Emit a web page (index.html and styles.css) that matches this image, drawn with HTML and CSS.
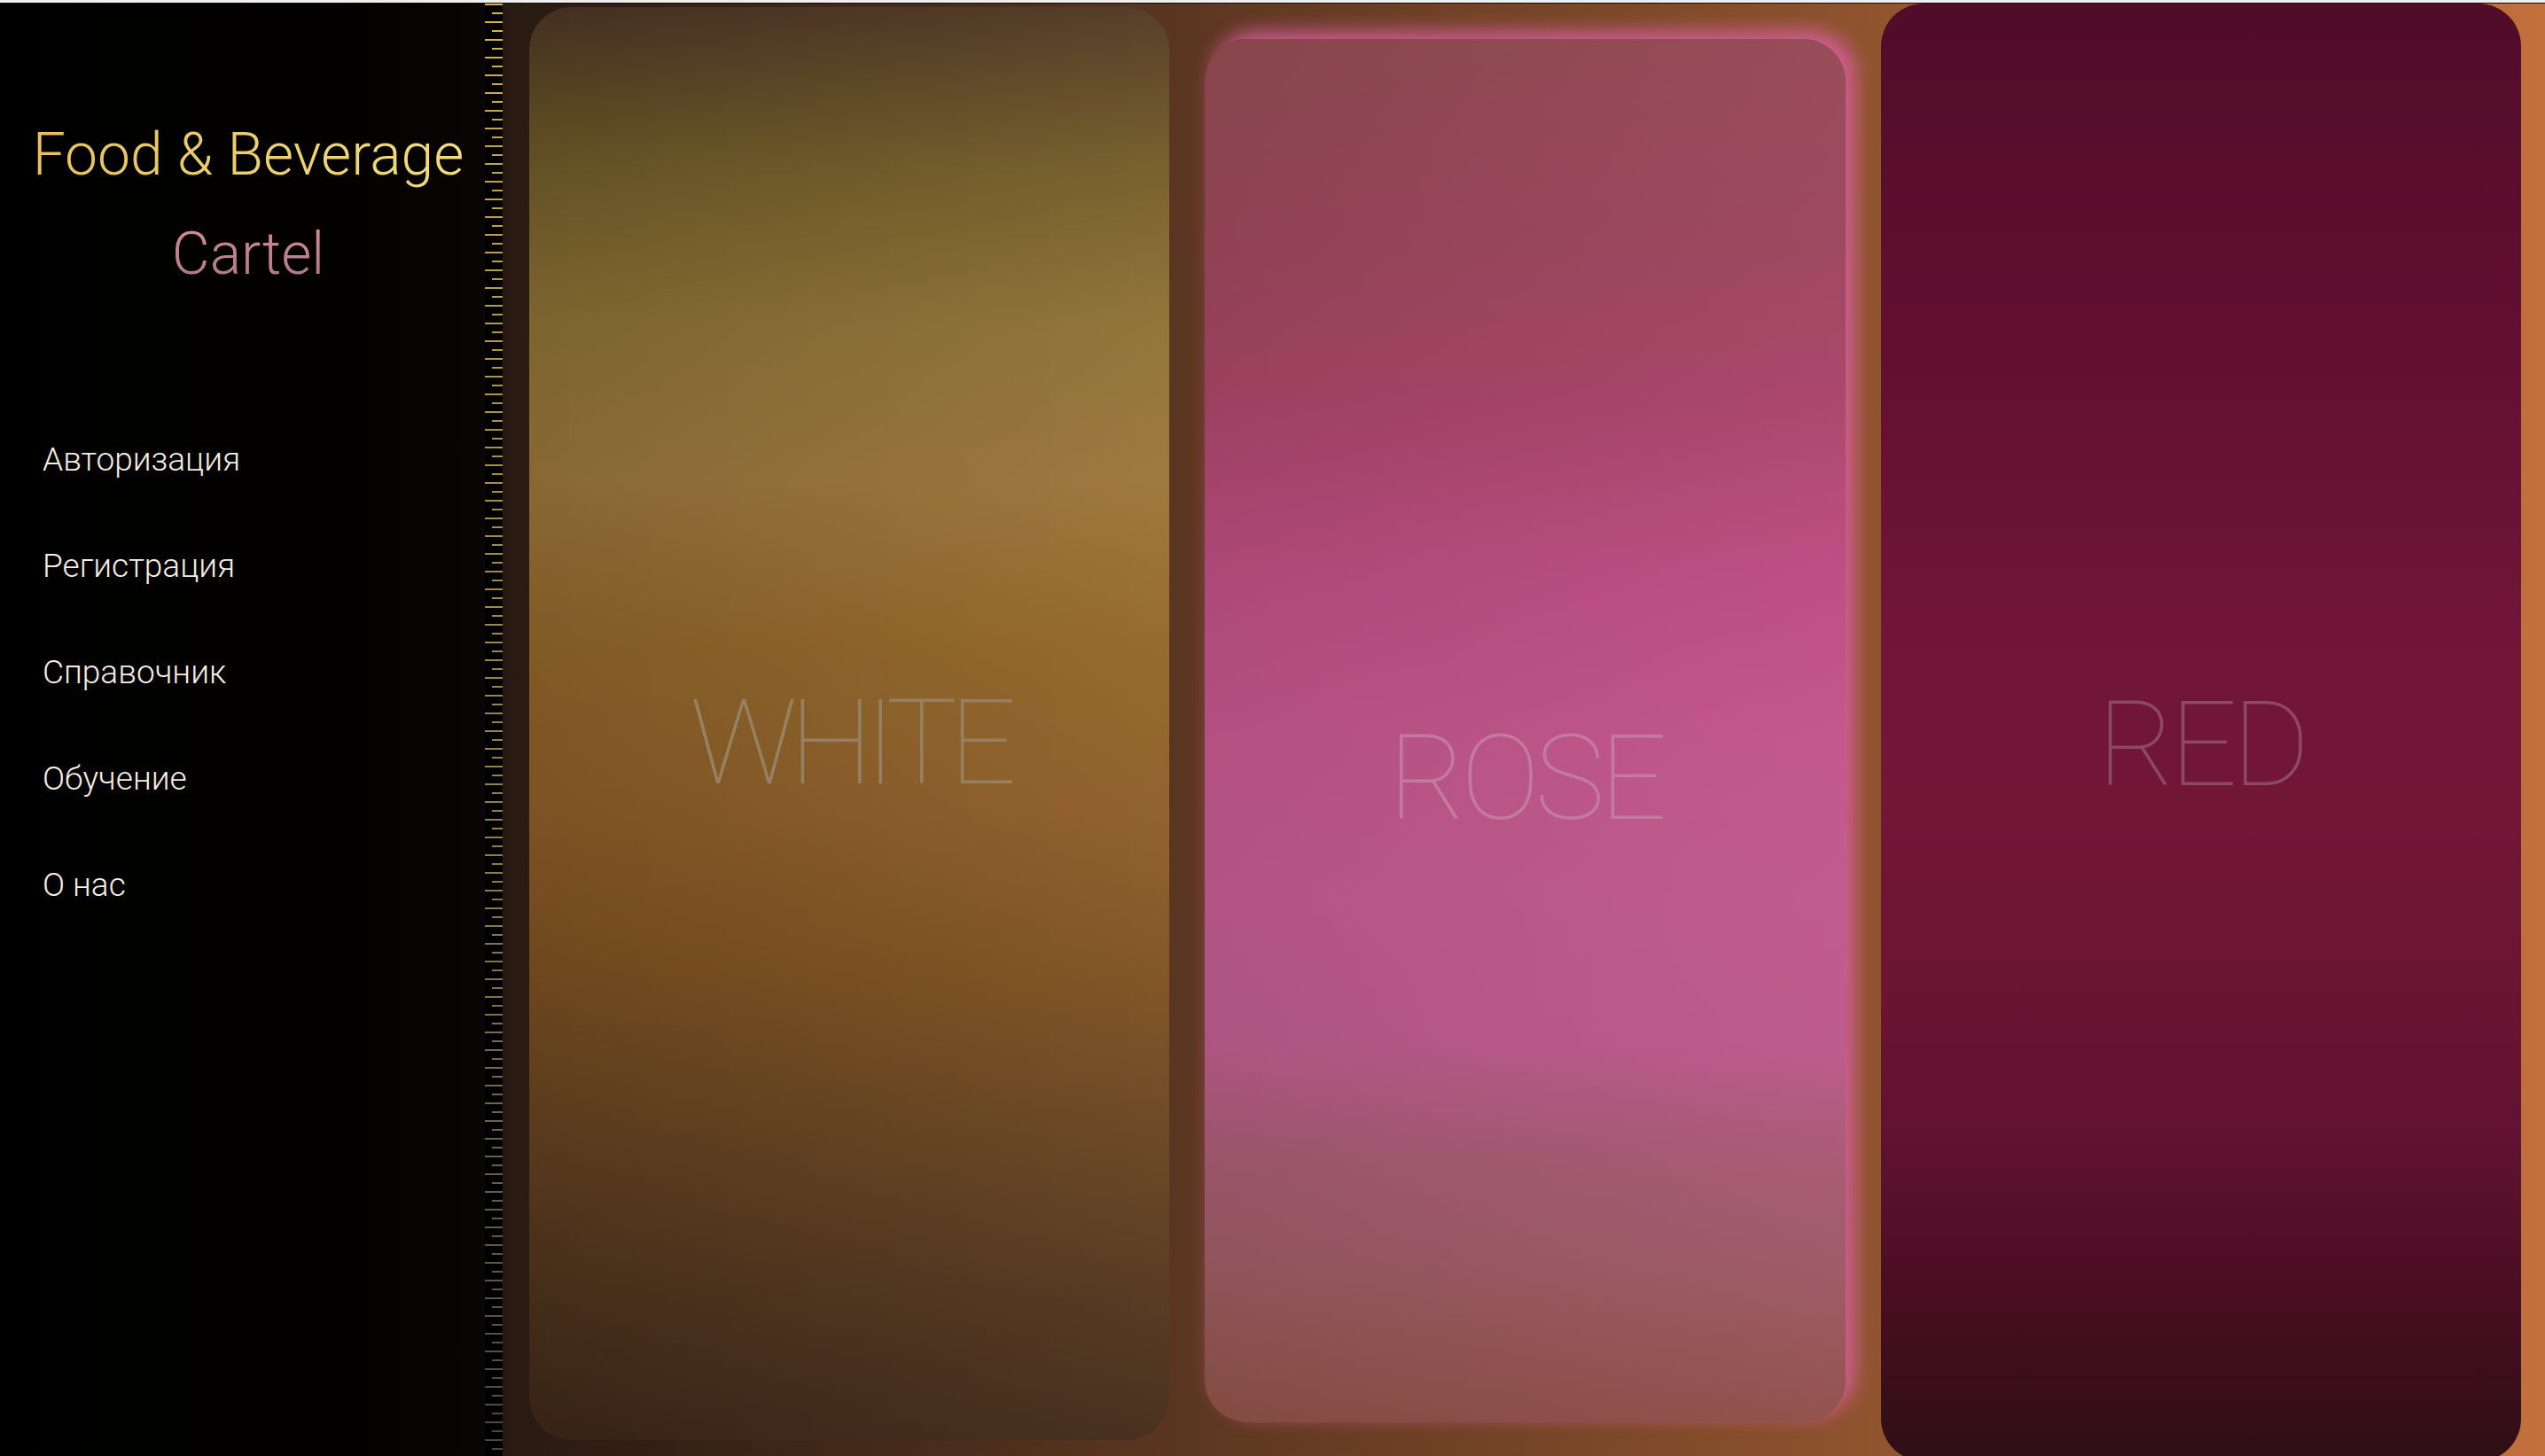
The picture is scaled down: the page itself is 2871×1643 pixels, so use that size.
FILE: index.html
```html
<!DOCTYPE html>
<html lang="ru">

<head>
    <meta charset="UTF-8">
    <meta name="viewport" content="width=device-width, initial-scale=1.0">
    <title>Food &amp; Beverage Cartel</title>
    <link rel="stylesheet" href="styles.css">
</head>

<body>
    <div class="topbar"></div>

    <div class="page">
        <div class="sidebar">
            <div class="logo">
                <div class="logo-top">Food &amp; Beverage</div>
                <div class="logo-bottom">Cartel</div>
            </div>
            <nav class="menu">
                <a href="#">Авторизация</a>
                <a href="#">Регистрация</a>
                <a href="#">Справочник</a>
                <a href="#">Обучение</a>
                <a href="#">О нас</a>
            </nav>
        </div>

        <div class="ruler"></div>

        <div class="main">
            <div class="card white">
                <span class="card-title">WHITE</span>
            </div>
            <div class="card rose">
                <span class="card-title">ROSE</span>
            </div>
            <div class="card red">
                <span class="card-title">RED</span>
            </div>
        </div>
    </div>
</body>

</html>
```

FILE: styles.css
```css
body {
    margin: 0;
    height: 1643px;
    overflow: hidden;
    font-family: Roboto, "Liberation Sans", sans-serif;
    background: #000;
}

.topbar {
    height: 3px;
    background-color: #efefef;
    border-bottom: 1px solid #120c08;
}

.page {
    display: flex;
    height: 1639px;
}

/* left column */
.sidebar {
    width: 547px;
    flex-shrink: 0;
    background: linear-gradient(90deg, #000 0%, #020100 60%, #080504 100%);
}

.logo {
    padding: 115px 0 0 13px;
    text-align: center;
    font-size: 66px;
    font-weight: 300;
    line-height: 112px;
}

.logo-top,
.logo-bottom {
    display: inline-block;
    -webkit-background-clip: text;
    background-clip: text;
    color: transparent;
}

.logo-top {
    background-image: linear-gradient(90deg, #e8c15e, #efdd7c);
}

.logo-bottom {
    background-image: linear-gradient(180deg, #d68c88 20%, #a27396 90%);
}

.menu {
    display: flex;
    flex-direction: column;
    margin-top: 116px;
    padding-left: 48px;
}

.menu a {
    color: #f6eee2;
    text-decoration: none;
    font-size: 37px;
    font-weight: 300;
    line-height: 120px;
}

/* tick strip */
.ruler {
    width: 20px;
    flex-shrink: 0;
    background: linear-gradient(180deg, #dcb642 0%, #c9a842 8%, #ab9146 30%, #8c7c4c 60%, #4a4638 100%);
    -webkit-mask-image: repeating-linear-gradient(180deg, #000 0 2px, transparent 2px 20px),
        repeating-linear-gradient(180deg, transparent 0 10px, #000 10px 12px, transparent 12px 20px);
    -webkit-mask-size: 20px 100%, 12px 100%;
    -webkit-mask-position: left top, right top;
    -webkit-mask-repeat: no-repeat;
    mask-image: repeating-linear-gradient(180deg, #000 0 2px, transparent 2px 20px),
        repeating-linear-gradient(180deg, transparent 0 10px, #000 10px 12px, transparent 12px 20px);
    mask-size: 20px 100%, 12px 100%;
    mask-position: left top, right top;
    mask-repeat: no-repeat;
}

/* wine cards */
.main {
    flex: 1;
    display: flex;
    gap: 40px;
    padding: 0 27px 0 30px;
    background: linear-gradient(90deg, #281a12, #c2703c);
}

.card {
    flex: 1;
    border-radius: 48px;
    text-align: center;
}

.card-title {
    display: block;
    font-size: 134px;
    font-weight: 100;
    line-height: 1;
    letter-spacing: -6px;
}

.card.white {
    margin: 4px 0 18px;
    padding-top: 764px;
    background: linear-gradient(90deg, rgba(0, 0, 0, 0.1), rgba(255, 200, 140, 0.07)),
        linear-gradient(180deg, #4a3423 0%, #6e5a28 11%, #8a7034 22%, #98743a 33%, #8e6428 45%, #8a5c28 56%, #7a5020 67%, #624020 79%, #4c321c 90%, #3c2618 100%);
}

.card.white .card-title {
    color: #978062;
    letter-spacing: -9px;
}

.card.rose {
    margin: 40px 0 38px;
    padding-top: 768px;
    background: linear-gradient(90deg, rgba(0, 0, 0, 0.06), rgba(255, 120, 200, 0.08)),
        linear-gradient(180deg, #8f4a50 0%, #984659 15%, #a54465 26%, #b74c7e 38%, #be5588 50%, #bc5a8c 62%, #b85a89 73%, #a45a72 80%, #985a60 89%, #8a5044 100%);
    box-shadow: 10px -8px 22px rgba(226, 96, 172, 0.85);
}

.card.rose .card-title {
    color: #c47a9e;
}

.card.red {
    margin: 0 0 -6px;
    padding-top: 770px;
    background: linear-gradient(180deg, #500c28 0%, #5a0e2c 12%, #621030 24%, #721638 45%, #721636 55%, #6c1532 66%, #601230 78%, #4a0e22 88%, #2e0f14 100%);
}

.card.red .card-title {
    color: #8c4a62;
}
```
